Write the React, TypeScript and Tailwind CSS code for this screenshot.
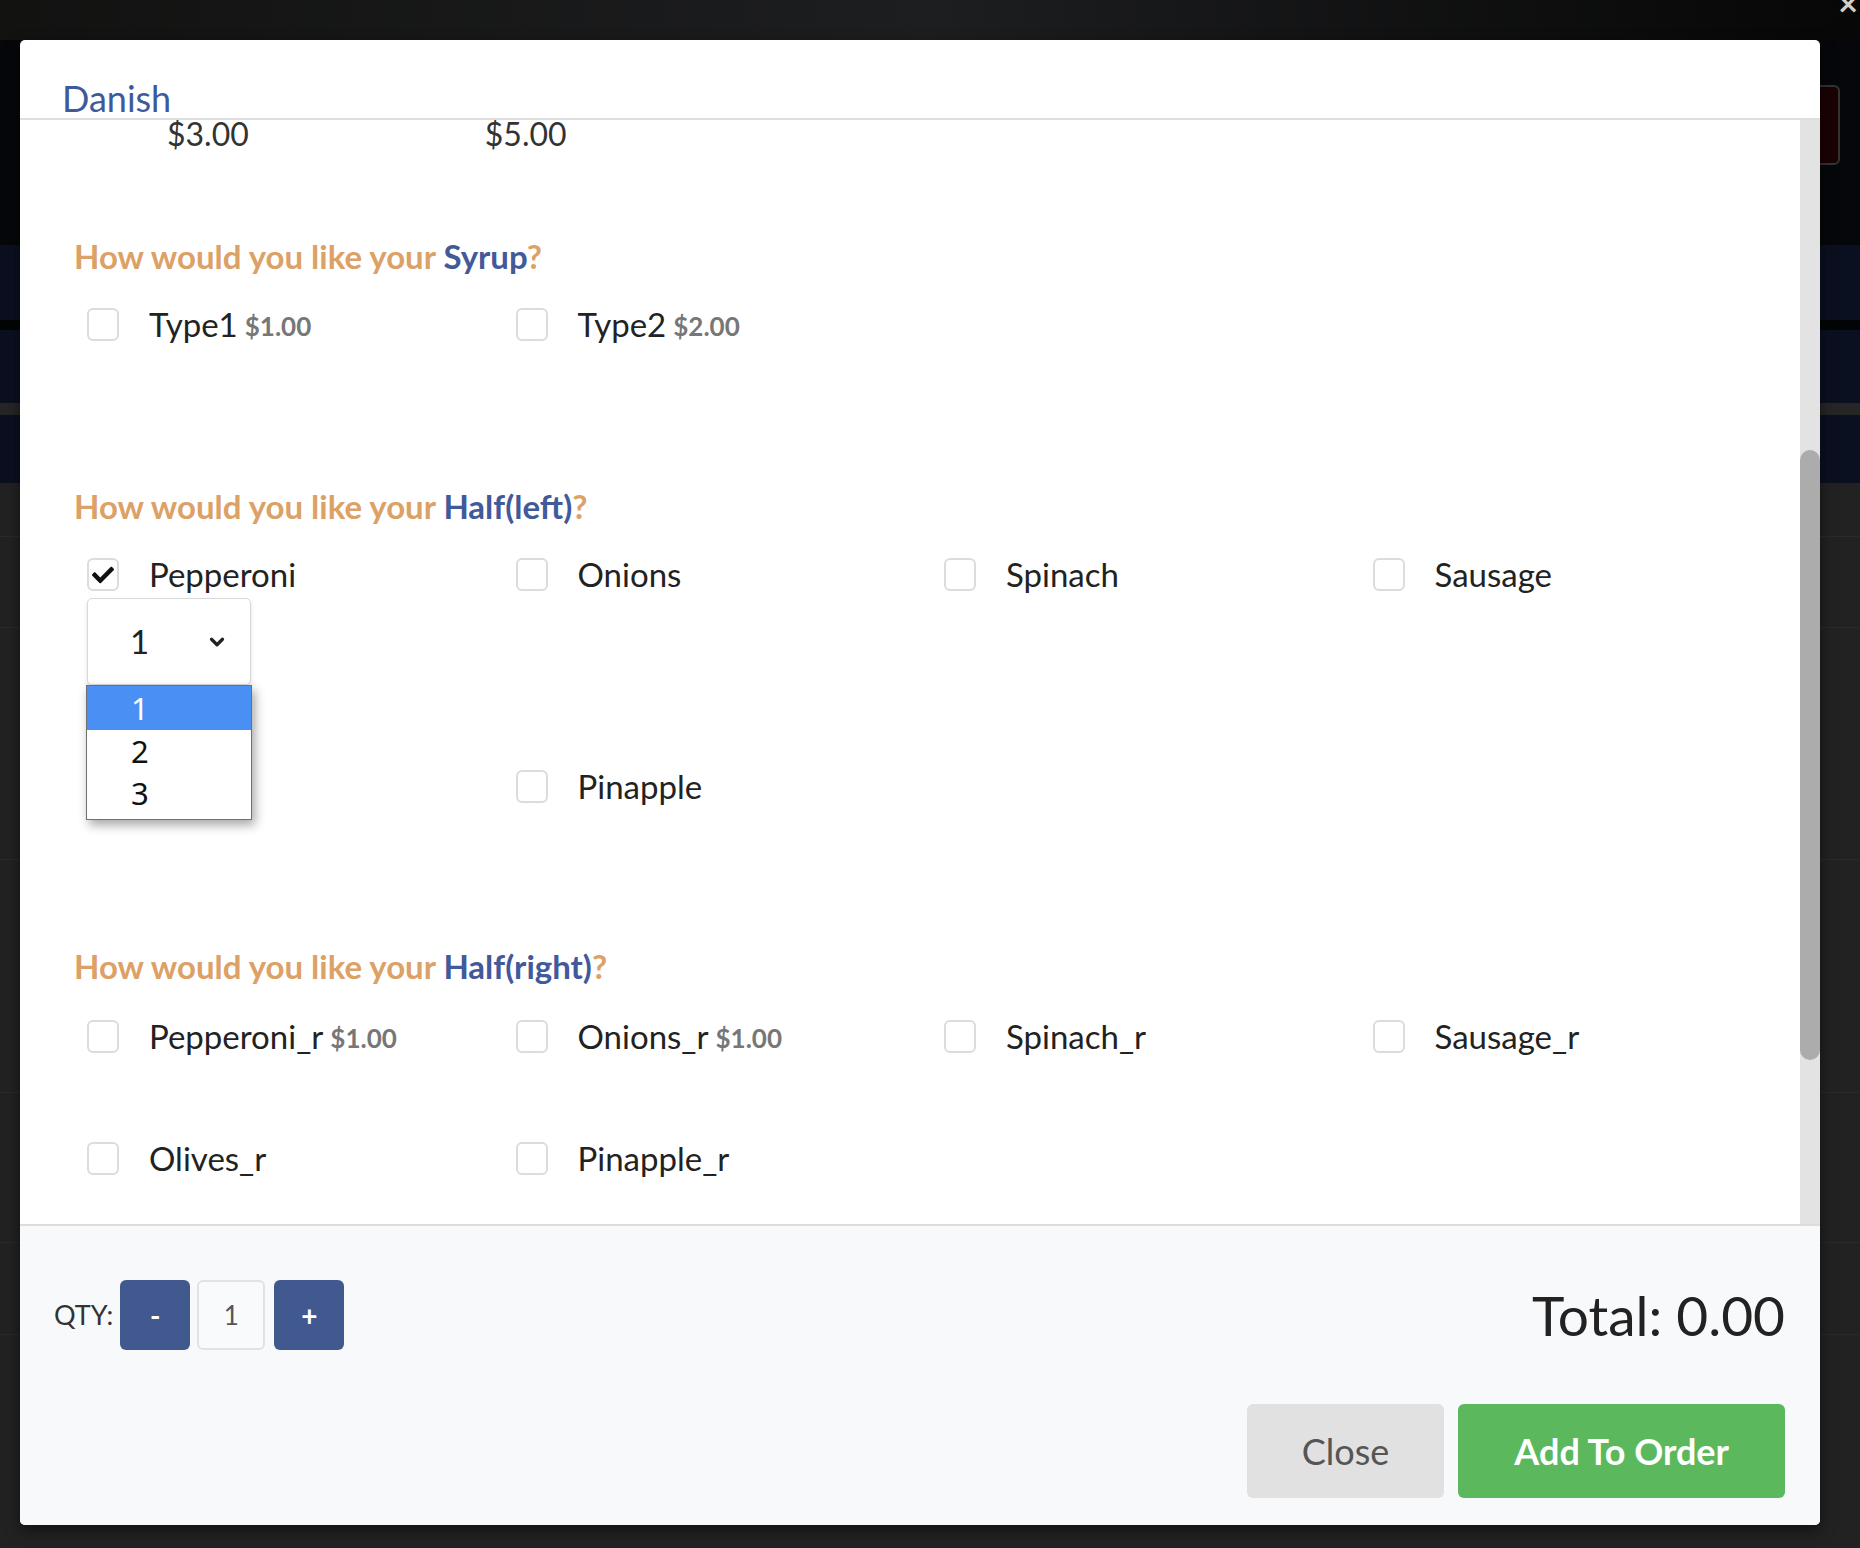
import { ChevronDown } from "lucide-react"
import { FaCheck } from "react-icons/fa"

interface Choice {
  label: string
  price?: string
  checked?: boolean
}

interface Section {
  name: string
  top: string
  gridTop: string
  items: Choice[]
}

const sections: Section[] = [
  {
    name: "Syrup",
    top: "mt-[90px]",
    gridTop: "mt-[35px]",
    items: [
      { label: "Type1", price: "$1.00" },
      { label: "Type2", price: "$2.00" },
    ],
  },
  {
    name: "Half(left)",
    top: "mt-[149px]",
    gridTop: "mt-[35px]",
    items: [
      { label: "Pepperoni", checked: true },
      { label: "Onions" },
      { label: "Spinach" },
      { label: "Sausage" },
      { label: "Olives" },
      { label: "Pinapple" },
    ],
  },
  {
    name: "Half(right)",
    top: "mt-[147px]",
    gridTop: "mt-[37px]",
    items: [
      { label: "Pepperoni_r", price: "$1.00" },
      { label: "Onions_r", price: "$1.00" },
      { label: "Spinach_r" },
      { label: "Sausage_r" },
      { label: "Olives_r" },
      { label: "Pinapple_r" },
    ],
  },
]

function QtySelect() {
  return (
    <div className="relative mt-[7px] -mb-[4px] w-[164px] h-[87px] rounded-[5px] border border-[#d8d8d8] bg-white shadow-[0_3px_4px_rgba(0,0,0,0.12)] flex items-center justify-between pl-[42px] pr-[22px]">
      <span className="text-[33px] leading-none text-[#222]">1</span>
      <ChevronDown size={22} strokeWidth={3.5} className="text-[#222]" />

      {/* open option list */}
      <div className="absolute z-20 left-[-2px] top-[calc(100%+1px)] w-[166px] border border-[#707070] bg-white shadow-[3px_5px_10px_rgba(0,0,0,0.35)] font-['Noto_Sans',sans-serif] text-[31px] leading-none">
        <div className="h-[44px] pl-[44px] flex items-center bg-[#4a8ff3] text-white">1</div>
        <div className="h-[42px] pl-[44px] flex items-center text-[#111]">2</div>
        <div className="h-[47px] pl-[44px] pb-[4px] flex items-center text-[#111]">3</div>
      </div>
    </div>
  )
}

function Option({ item }: { item: Choice }) {
  return (
    <div className="flex flex-col">
      <div className="flex items-center h-[33px]">
        <div className="w-[32px] h-[33px] shrink-0 rounded-[6px] border-2 border-[#dcdcdc] bg-white flex items-center justify-center">
          {item.checked && <FaCheck size={22} className="text-[#111]" />}
        </div>
        <span className="ml-[30px] text-[33px] leading-none text-[#222] whitespace-nowrap">{item.label}</span>
        {item.price && (
          <span className="ml-[7px] mt-[3px] text-[26px] leading-none font-bold text-[#777]">{item.price}</span>
        )}
      </div>
      {item.checked && <QtySelect />}
    </div>
  )
}

export default function App() {
  return (
    <div className="relative w-[1860px] h-[1548px] overflow-hidden bg-[#222] font-['Lato',sans-serif]">
      {/* page behind the overlay */}
      <div className="flex flex-col">
        <div className="h-[40px] bg-gradient-to-r from-[#121211] via-[#1d1e20] to-[#070707]" />
        <div className="h-[205px] bg-[#05070a]" />
        <div className="h-[75px] bg-[#0b1020]" />
        <div className="h-[10px] bg-[#030405]" />
        <div className="h-[73px] bg-[#0b1020]" />
        <div className="h-[12px] bg-[#262626]" />
        <div className="h-[68px] bg-[#0b1020]" />
        <div className="h-[54px] border-b border-[#2a2a2a]" />
        <div className="h-[91px] border-b border-[#2a2a2a]" />
        <div className="h-[232px] border-b border-[#2a2a2a]" />
        <div className="h-[233px] border-b border-[#2a2a2a]" />
        <div className="h-[150px] border-b border-[#2a2a2a]" />
        <div className="h-[92px] border-b border-[#2a2a2a]" />
      </div>
      <div className="absolute right-[20px] top-[85px] w-[30px] h-[80px] rounded-[6px] border-2 border-[#333] bg-[#1a0203]" />
      <div className="absolute right-[2px] top-[-14px] text-[34px] leading-none font-bold text-[#d0d0d0]">×</div>

      {/* modal */}
      <div className="absolute left-[20px] top-[40px] w-[1800px] h-[1485px] rounded-[5px] bg-white flex flex-col overflow-hidden shadow-[0_5px_15px_rgba(0,0,0,0.5)]">
        <div className="h-[80px] shrink-0 border-b-2 border-[#dedede] pl-[42px] pt-[40px]">
          <h4 className="text-[36px] leading-none text-[#3f5a9a]">Danish</h4>
        </div>

        <div className="flex-1 flex min-h-0">
          <div className="flex-1 overflow-hidden pl-[54px]">
            <div className="-mt-[2px] flex text-[32px] leading-[32px] text-[#333]">
              <span className="ml-[93px]">$3.00</span>
              <span className="ml-[236px]">$5.00</span>
            </div>

            {sections.map((s) => (
              <div key={s.name} className={s.top}>
                <h3 className="text-[33px] leading-[33px] font-bold text-[#dca166]">
                  How would you like your <span className="text-[#42599a]">{s.name}</span>?
                </h3>
                <div className={`${s.gridTop} ml-[13px] grid grid-cols-[repeat(4,428.5px)] gap-y-[89px] items-start`}>
                  {s.items.map((it) => (
                    <Option key={it.label} item={it} />
                  ))}
                </div>
              </div>
            ))}
          </div>

          {/* scrollbar */}
          <div className="w-[20px] shrink-0 bg-[#e3e3e3] pt-[330px]">
            <div className="h-[610px] rounded-full bg-[#acacac]" />
          </div>
        </div>

        <div className="h-[301px] shrink-0 border-t-2 border-[#dcdcdc] bg-[#f8f9fa] pl-[34px] pr-[35px] pt-[54px] pb-[27px] flex flex-col">
          <div className="h-[70px] flex items-center justify-between">
            <div className="flex items-center">
              <span className="text-[27px] text-[#333]">QTY:</span>
              <button className="ml-[7px] w-[70px] h-[70px] rounded-[6px] bg-[#42598f] text-white text-[28px] font-bold">-</button>
              <div className="ml-[7px] w-[68px] h-[70px] rounded-[6px] border-2 border-[#e2e2e2] bg-[#f9fafb] flex items-center justify-center text-[26px] text-[#555]">1</div>
              <button className="ml-[9px] w-[70px] h-[70px] rounded-[6px] bg-[#42598f] text-white text-[28px] font-bold">+</button>
            </div>
            <div className="text-[55px] leading-none text-[#222]">Total: 0.00</div>
          </div>
          <div className="mt-auto flex justify-end gap-[14px]">
            <button className="h-[94px] px-[55px] rounded-[6px] bg-[#e1e1e2] text-[36px] text-[#555]">Close</button>
            <button className="h-[94px] px-[56px] rounded-[6px] bg-[#5cb85c] text-[36px] font-bold text-white">Add To Order</button>
          </div>
        </div>
      </div>
    </div>
  )
}
